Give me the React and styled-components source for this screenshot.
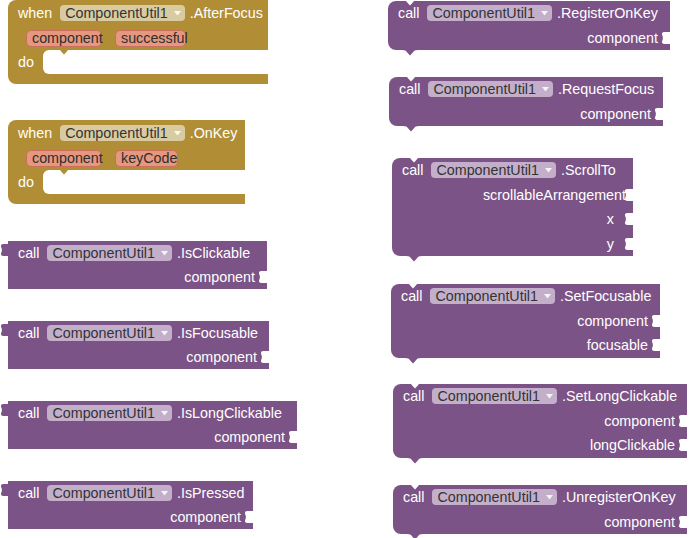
import React from "react";
import styled, { createGlobalStyle } from "styled-components";

const PURPLE = "#7c5386";
const GOLD = "#b18e35";

const Global = createGlobalStyle`
  html, body {
    margin: 0;
    padding: 0;
    background: #fff;
  }
  body {
    font-family: "Liberation Sans", Arial, sans-serif;
    font-size: 14.3px;
  }
`;

const Canvas = styled.div`
  position: relative;
  width: 690px;
  height: 538px;
  overflow: hidden;
  background: #fff;
`;

// blocks sit on a free workspace canvas, their place is the content
const Placed = styled.div`
  position: absolute;
  left: ${(p) => p.$x}px;
  top: ${(p) => p.$y}px;
  width: ${(p) => p.$w}px;
`;

const Body = styled.div`
  position: relative;
  background: ${(p) => p.$color};
  border-radius: ${(p) => (p.$statement ? "8px 0 0 8px" : "0")};
`;

const Row = styled.div`
  position: relative;
  display: flex;
  align-items: center;
  height: ${(p) => p.$h}px;
  padding: 0 ${(p) => p.$pr || 12}px 0 10px;
  justify-content: ${(p) => (p.$end ? "flex-end" : "flex-start")};
  white-space: nowrap;
`;

const Label = styled.span`
  color: #fff;
  line-height: 1;
`;

const Method = styled(Label)`
  margin-left: 5px;
`;

const Drop = styled.span`
  display: inline-flex;
  align-items: center;
  height: 16px;
  margin-left: 8px;
  padding: 0 4px 0 5px;
  border-radius: 4px;
  background: ${(p) => p.$bg};
  color: #333;
  line-height: 1;
`;

const Arrow = styled.svg`
  margin-left: 6px;
  margin-top: 1px;
`;

const Pills = styled.div`
  display: flex;
  align-items: center;
  gap: 13px;
  height: 24px;
  padding-left: 18px;
`;

const Pill = styled.span`
  box-sizing: border-box;
  display: inline-flex;
  align-items: center;
  width: ${(p) => p.$w}px;
  height: 17px;
  padding-left: 5px;
  border: 1px solid #c9705a;
  border-radius: 5px;
  background: #e5987f;
  color: #2e2e2e;
  line-height: 1;
  white-space: nowrap;
  overflow: visible;
`;

const Top = styled.div`
  background: ${GOLD};
  border-radius: 8px 0 0 0;
`;

const DoRow = styled.div`
  display: flex;
  height: 24px;
  background: ${GOLD};
`;

const Arm = styled.div`
  display: flex;
  align-items: center;
  width: 35px;
  padding-left: 10px;
  box-sizing: border-box;
  color: #fff;
`;

const Slot = styled.div`
  position: relative;
  flex: 1;
  background: #fff;
  border-radius: 6px 0 0 6px;
`;

const Bottom = styled.div`
  height: 10px;
  background: ${GOLD};
  border-radius: 0 0 0 8px;
`;

const Shape = styled.svg`
  position: absolute;
  display: block;
`;

const NotchTop = styled(Shape)`
  left: ${(p) => p.$left || 14}px;
  top: -1px;
`;

const NotchBottom = styled(Shape)`
  left: 14px;
  top: 100%;
`;

const OutTab = styled(Shape)`
  left: -8px;
  top: 3px;
`;

const SocketShape = styled(Shape)`
  right: 0;
  top: 50%;
  transform: translateY(-50%);
`;

const vPath = "M0 0 C3 0 4 0.8 5 2.2 L8 5.5 L11 2.2 C12 0.8 13 0 16 0 Z";
const tabPath =
  "M9 0 H3.5 C1.3 0 0.4 1.2 1.3 3.4 C2.1 5.2 2.1 6.8 1.3 8.6 C0.4 10.8 1.3 12 3.5 12 H9 Z";

function V({ as: Comp, fill, ...rest }) {
  return (
    <Comp width="16" height="6" viewBox="0 0 16 6" {...rest}>
      <path d={vPath} fill={fill} />
    </Comp>
  );
}

function Tab({ as: Comp, fill }) {
  return (
    <Comp width="9" height="12" viewBox="0 0 9 12">
      <path d={tabPath} fill={fill} />
    </Comp>
  );
}

function Dropdown({ bg }) {
  return (
    <Drop $bg={bg}>
      ComponentUtil1
      <Arrow width="7" height="5" viewBox="0 0 7 5">
        <path d="M0 0 H7 L3.5 4.5 Z" fill="#fff" fillOpacity="0.85" />
      </Arrow>
    </Drop>
  );
}

function ArgRow({ name, h, pr }) {
  return (
    <Row $h={h} $pr={pr} $end>
      <Label>{name}</Label>
      <Tab as={SocketShape} fill="#fff" />
    </Row>
  );
}

function ValueBlock({ x, y, w, method }) {
  return (
    <Placed $x={x} $y={y} $w={w}>
      <Body $color={PURPLE}>
        <Tab as={OutTab} fill={PURPLE} />
        <Row $h={24}>
          <Label>call</Label>
          <Dropdown bg="#c3afca" />
          <Method>.{method}</Method>
        </Row>
        <ArgRow name="component" h={24} />
      </Body>
    </Placed>
  );
}

function StatementBlock({ x, y, w, method, args }) {
  return (
    <Placed $x={x} $y={y} $w={w}>
      <Body $color={PURPLE} $statement>
        <V as={NotchTop} fill="#fff" />
        <Row $h={24.5}>
          <Label>call</Label>
          <Dropdown bg="#c3afca" />
          <Method>.{method}</Method>
        </Row>
        {args.map((a) => {
          const [name, pr] = Array.isArray(a) ? a : [a];
          return <ArgRow key={name} name={name} h={24.5} pr={pr} />;
        })}
        <V as={NotchBottom} fill={PURPLE} />
      </Body>
    </Placed>
  );
}

function EventBlock({ x, y, w, event, params }) {
  return (
    <Placed $x={x} $y={y} $w={w}>
      <Top>
        <Row $h={26}>
          <Label>when</Label>
          <Dropdown bg="#d9cba1" />
          <Method>.{event}</Method>
        </Row>
        <Pills>
          {params.map((p) => (
            <Pill key={p.name} $w={p.w}>
              {p.name}
            </Pill>
          ))}
        </Pills>
      </Top>
      <DoRow>
        <Arm>do</Arm>
        <Slot>
          <V as={NotchTop} $left={13} fill={GOLD} />
        </Slot>
      </DoRow>
      <Bottom />
    </Placed>
  );
}

const valueBlocks = [
  { y: 241, w: 259, method: "IsClickable" },
  { y: 321, w: 261, method: "IsFocusable" },
  { y: 401, w: 289, method: "IsLongClickable" },
  { y: 481, w: 245, method: "IsPressed" },
];

const statementBlocks = [
  { x: 388, y: 1, w: 282, method: "RegisterOnKey", args: ["component"] },
  { x: 389, y: 77, w: 274, method: "RequestFocus", args: ["component"] },
  {
    x: 392,
    y: 158,
    w: 241,
    method: "ScrollTo",
    args: [["scrollableArrangement", 7], ["x", 19], ["y", 19]],
  },
  { x: 391, y: 284, w: 269, method: "SetFocusable", args: ["component", "focusable"] },
  { x: 393, y: 384, w: 294, method: "SetLongClickable", args: ["component", "longClickable"] },
  { x: 393, y: 485, w: 294, method: "UnregisterOnKey", args: ["component"] },
];

export default function App() {
  return (
    <>
      <Global />
      <Canvas>
        <EventBlock
          x={8}
          y={0}
          w={260}
          event="AfterFocus"
          params={[
            { name: "component", w: 76 },
            { name: "successful", w: 71 },
          ]}
        />
        <EventBlock
          x={8}
          y={120}
          w={237}
          event="OnKey"
          params={[
            { name: "component", w: 76 },
            { name: "keyCode", w: 63 },
          ]}
        />
        {valueBlocks.map((b) => (
          <ValueBlock key={b.method} x={8} {...b} />
        ))}
        {statementBlocks.map((b) => (
          <StatementBlock key={b.method} {...b} />
        ))}
      </Canvas>
    </>
  );
}
